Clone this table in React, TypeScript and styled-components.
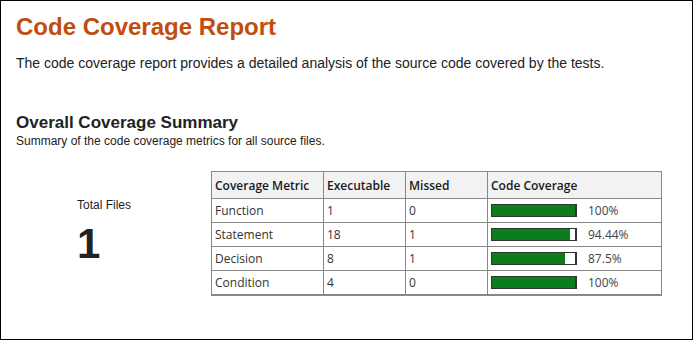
import React from 'react';
import styled, { createGlobalStyle } from 'styled-components';

const GlobalStyle = createGlobalStyle`
  html, body {
    margin: 0;
    padding: 0;
    background: #ffffff;
  }
  body {
    font-family: "Liberation Sans", Arial, sans-serif;
    color: #222222;
  }
`;

const ReportFrame = styled.div`
  box-sizing: border-box;
  width: 693px;
  height: 340px;
  border: 1px solid #000000;
  padding: 0 15px;
  overflow: hidden;
`;

const Title = styled.h1`
  margin: 11px 0 0;
  font-size: 24px;
  line-height: 30px;
  font-weight: bold;
  color: #bf4e0e;
`;

const Intro = styled.p`
  margin: 12px 0 0;
  font-size: 14px;
  line-height: 18px;
  color: #222222;
`;

const SectionTitle = styled.h2`
  margin: 41px 0 0;
  font-size: 17px;
  line-height: 20px;
  font-weight: bold;
  color: #222222;
`;

const SectionNote = styled.p`
  margin: 1px 0 0;
  font-size: 12px;
  line-height: 15px;
  color: #222222;
`;

const SummaryRow = styled.div`
  display: flex;
  align-items: flex-start;
  margin-top: 22px;
`;

const TotalBlock = styled.div`
  box-sizing: border-box;
  width: 195px;
  padding: 27px 0 0 61px;
`;

const TotalLabel = styled.div`
  font-size: 12px;
  line-height: 15px;
  color: #222222;
`;

const TotalValue = styled.div`
  margin-top: 11px;
  font-size: 42px;
  line-height: 40px;
  font-weight: bold;
  color: #222222;
`;

const MetricsTable = styled.table`
  border-collapse: collapse;
  font-family: "Open Sans", "Noto Sans", sans-serif;
  font-size: 12px;
  color: #333333;
  border-bottom: 2px solid #888888;
`;

const HeadCell = styled.th<{ $w: number }>`
  width: ${(p) => p.$w}px;
  box-sizing: border-box;
  height: 27px;
  padding: 0 3px;
  text-align: left;
  font-weight: 600;
  color: #1a1a1a;
  background: #f2f2f2;
  border: 1px solid #888888;
`;

const Cell = styled.td`
  height: 23px;
  padding: 0 3px;
  border: 1px solid #888888;
  line-height: 16px;
`;

const CoverageWrap = styled.div`
  display: flex;
  align-items: center;
`;

const Bar = styled.div`
  box-sizing: border-box;
  width: 86px;
  height: 13px;
  border: 1px solid #333333;
  border-right-width: 2px;
  background: #ffffff;
`;

const BarFill = styled.div`
  height: 100%;
  background: #0b7d1b;
`;

const Percent = styled.span`
  margin-left: 11px;
  color: #444444;
`;

const rows = [
  { metric: 'Function', exec: 1, missed: 0, pct: 100, label: '100%' },
  { metric: 'Statement', exec: 18, missed: 1, pct: 94.44, label: '94.44%' },
  { metric: 'Decision', exec: 8, missed: 1, pct: 87.5, label: '87.5%' },
  { metric: 'Condition', exec: 4, missed: 0, pct: 100, label: '100%' },
];

const App: React.FC = () => {
  return (
    <>
      <GlobalStyle />
      <ReportFrame>
        <Title>Code Coverage Report</Title>
        <Intro>
          The code coverage report provides a detailed analysis of the source code covered by the tests.
        </Intro>
        <SectionTitle>Overall Coverage Summary</SectionTitle>
        <SectionNote>Summary of the code coverage metrics for all source files.</SectionNote>
        <SummaryRow>
          <TotalBlock>
            <TotalLabel>Total Files</TotalLabel>
            <TotalValue>1</TotalValue>
          </TotalBlock>
          <MetricsTable>
            <thead>
              <tr>
                <HeadCell $w={112}>Coverage Metric</HeadCell>
                <HeadCell $w={82}>Executable</HeadCell>
                <HeadCell $w={82}>Missed</HeadCell>
                <HeadCell $w={174}>Code Coverage</HeadCell>
              </tr>
            </thead>
            <tbody>
              {rows.map((r) => (
                <tr key={r.metric}>
                  <Cell>{r.metric}</Cell>
                  <Cell>{r.exec}</Cell>
                  <Cell>{r.missed}</Cell>
                  <Cell>
                    <CoverageWrap>
                      <Bar>
                        <BarFill style={{ width: `${r.pct}%` }} />
                      </Bar>
                      <Percent>{r.label}</Percent>
                    </CoverageWrap>
                  </Cell>
                </tr>
              ))}
            </tbody>
          </MetricsTable>
        </SummaryRow>
      </ReportFrame>
    </>
  );
};

export default App;
